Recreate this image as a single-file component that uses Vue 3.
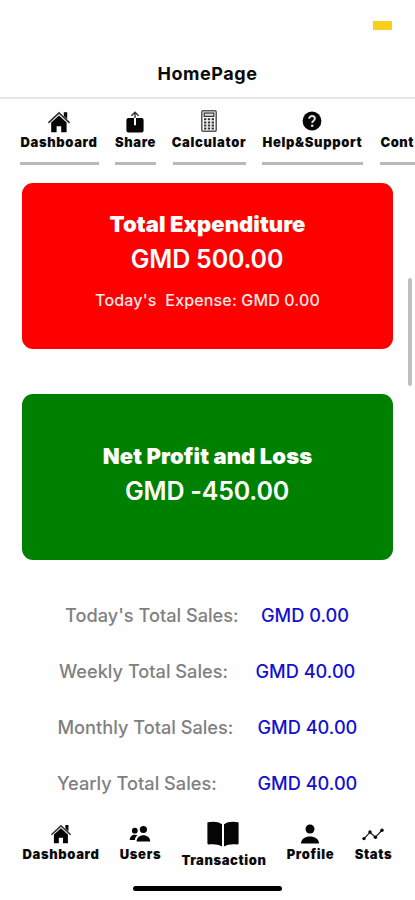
<script setup>
const tabs = [
  { label: 'Dashboard', icon: 'home', cls: 't-dashboard' },
  { label: 'Share', icon: 'share', cls: 't-share' },
  { label: 'Calculator', icon: 'calculator', cls: 't-calculator' },
  { label: 'Help&Support', icon: 'help', cls: 't-help' },
  { label: 'Cont', icon: '', cls: 't-contact' },
]
const sales = [
  { label: "Today's Total Sales:", value: 'GMD 0.00', cls: 's-today' },
  { label: 'Weekly Total Sales:', value: 'GMD 40.00', cls: 's-week' },
  { label: 'Monthly Total Sales:', value: 'GMD 40.00', cls: 's-month' },
  { label: 'Yearly Total Sales:', value: 'GMD 40.00', cls: 's-year' },
]
const nav = [
  { label: 'Dashboard', icon: 'home', cls: 'n-dashboard' },
  { label: 'Users', icon: 'users', cls: 'n-users' },
  { label: 'Transaction', icon: 'book', cls: 'n-transaction' },
  { label: 'Profile', icon: 'person', cls: 'n-profile' },
  { label: 'Stats', icon: 'stats', cls: 'n-stats' },
]
</script>

<template>
  <div class="screen">
    <svg class="defs" width="0" height="0" aria-hidden="true">
      <symbol id="home" viewBox="0 0 24 22">
        <path d="M16.8 1.200h3.400v7l-3.400-3.200z" />
        <path d="M12 4.600 4.200 11.600V21.200h5.400v-6h4.600v6h5.400v-9.600z" />
        <path d="M1.400 11.800 12 2l10.600 9.800" fill="none" stroke="#333" stroke-width="1.700" />
      </symbol>
      <symbol id="share" viewBox="0 0 18 22">
        <path d="M2.400 7h5.600v7.200h2V7h5.600a2 2 0 0 1 2 2v10.400a2 2 0 0 1-2 2H2.400a2 2 0 0 1-2-2V9a2 2 0 0 1 2-2z" />
        <path d="M9 7V1.500M5.400 4.800 9 1.200l3.600 3.600" fill="none" stroke="#333" stroke-width="1.400" />
      </symbol>
      <symbol id="calculator" viewBox="0 0 16 22">
        <rect x=".8" y=".8" width="14.400" height="20.400" rx="1.200" fill="#fff" stroke="#555" stroke-width="1.500" />
        <rect x="3.200" y="3" width="9.600" height="3.400" fill="#ddd" stroke="#333" stroke-width="1.200" />
        <path d="M3 9.200h2.400m1.400 0h2.400m1.400 0H13M3 12.400h2.400m1.400 0h2.400m1.400 0H13M3 15.600h2.400m1.400 0h2.400m1.400 0H13M3 18.600h2.400m1.400 0h2.400m1.400 0H13" stroke="#333" stroke-width="2" />
      </symbol>
      <symbol id="help" viewBox="0 0 20 20">
        <circle cx="10" cy="10" r="9.400" />
        <path d="M7.200 7.800c0-3.800 5.700-3.500 5.700-.2 0 2.200-2.700 2.100-2.700 4.300" fill="none" stroke="#ddd" stroke-width="2" />
        <circle cx="10.200" cy="14.700" r="1.300" fill="#ddd" />
      </symbol>
      <symbol id="users" viewBox="0 0 22 18">
        <circle cx="14.400" cy="4.500" r="3.600" />
        <circle cx="5.800" cy="5.700" r="2.900" />
        <path d="M7.600 16.600c0-8.400 13.600-8.400 13.600 0z" />
        <path d="M.8 15c0-5 4.400-6.200 7.600-4.800-1.400 1.200-2.200 2.500-2.500 4.800z" />
      </symbol>
      <symbol id="book" viewBox="0 0 32 26">
        <path d="M.8 1.200C5.600.2 11.600.4 15 3.200v22.200C11.600 23.200 6 22.800 2 23.400.9 23.500.4 23 .4 22V2c0-.5.100-.7.400-.8z" />
        <path d="M31.200 1.200C26.400.2 20.400.4 17 3.200v22.200c3.400-2.200 9-2.600 13-2 1.100.1 1.600-.4 1.600-1.400V2c0-.5-.1-.7-.4-.8z" />
      </symbol>
      <symbol id="person" viewBox="0 0 20 20">
        <circle cx="10" cy="5" r="4.500" />
        <path d="M1 19.600c0-9.400 18-9.400 18 0z" />
      </symbol>
      <symbol id="stats" viewBox="0 0 22 13">
        <path d="m2 10.600 6-6.200 5.400 4.800L20 2.200" fill="none" stroke="#222" stroke-width="1.300" />
        <circle cx="2" cy="10.600" r="1.700" /><circle cx="8" cy="4" r="1.700" />
        <circle cx="13.400" cy="9.200" r="1.700" /><circle cx="20" cy="2.200" r="1.700" />
      </symbol>
    </svg>

    <header class="header">
      <div class="status"><span class="battery"></span></div>
      <h1 class="title">HomePage</h1>
    </header>

    <nav class="tabs">
      <a v-for="t in tabs" :key="t.label" class="tab" :class="t.cls">
        <span class="tab-icon"><svg v-if="t.icon" :class="'i-' + t.icon"><use :href="'#' + t.icon" /></svg></span>
        <span class="tab-label">{{ t.label }}</span>
      </a>
    </nav>

    <main class="content">
      <section class="card expense">
        <h2 class="card-title">Total Expenditure</h2>
        <p class="amount">GMD 500.00</p>
        <p class="note">Today's&nbsp; Expense: GMD 0.00</p>
      </section>
      <section class="card profit">
        <h2 class="card-title">Net Profit and Loss</h2>
        <p class="amount">GMD -450.00</p>
      </section>
      <ul class="sales">
        <li v-for="s in sales" :key="s.label" :class="s.cls">
          <span class="sale-label">{{ s.label }}</span><span class="sale-value">{{ s.value }}</span>
        </li>
      </ul>
    </main>

    <footer class="bottom">
      <nav class="nav">
        <a v-for="n in nav" :key="n.label" class="nav-item" :class="n.cls">
          <span class="nav-icon"><svg :class="'i-' + n.icon"><use :href="'#' + n.icon" /></svg></span>
          <span class="nav-label">{{ n.label }}</span>
        </a>
      </nav>
      <div class="indicator"></div>
    </footer>
    <div class="scrollbar"></div>
  </div>
</template>

<style>
body { margin: 0; background: #fefefe; }
</style>

<style scoped>
.screen { position: relative; width: 415px; height: 900px; overflow: hidden; display: flex; flex-direction: column; background: #fefefe; font-family: Inter, "Liberation Sans", sans-serif; color: #0a0a0a; white-space: nowrap; }
.defs { position: absolute; }
h1, h2, p, ul { margin: 0; padding: 0; }
.header { box-sizing: border-box; height: 99px; border-bottom: 2px solid #e5e5e5; }
.status { height: 61px; box-sizing: border-box; padding: 21px 23px 0 0; display: flex; justify-content: flex-end; }
.battery { width: 19px; height: 9px; background: #f7cf1d; }
.title { font-size: 18px; line-height: 25px; font-weight: 700; text-align: center; letter-spacing: .55px; }
.tabs { display: flex; gap: 16.500px; height: 84px; box-sizing: border-box; padding: 10px 0 0 19.500px; }
.tab { flex: none; display: flex; flex-direction: column; align-items: center; height: 56px; box-sizing: border-box; border-bottom: 3px solid #b8b8b8; }
.tab-icon { height: 25px; display: flex; align-items: center; }
.tab-label, .nav-label { font-size: 13px; line-height: 16px; font-weight: 900; letter-spacing: .65px; }
.t-dashboard { width: 79px; }
.t-share { width: 41px; }
.t-calculator { width: 73px; }
.t-help { width: 101px; }
.t-contact { width: 35.500px; align-items: flex-start; }
.t-contact .tab-label { letter-spacing: .5px; padding-left: 1px; }
svg { fill: #050505; display: block; }
.i-home { width: 24px; height: 22px; }
.i-share { width: 18px; height: 22px; margin-right: 2px; }
.i-calculator { width: 16px; height: 22px; margin-bottom: 1px; }
.i-help { width: 20px; height: 20px; margin: 0 2px 1px 0; }
.i-users { width: 22px; height: 18px; }
.i-book { width: 32px; height: 26px; }
.i-person { width: 20px; height: 20px; }
.i-stats { width: 22px; height: 13px; }
.content { padding: 0 22px; }
.card { height: 166px; box-sizing: border-box; border-radius: 11px; color: #fff; text-align: center; }
.expense { background: #fe0000; padding-top: 26px; }
.profit { background: #008000; margin-top: 45px; padding-top: 47px; }
.card-title { font-size: 22px; line-height: 31px; font-weight: 900; letter-spacing: .08px; }
.amount { font-size: 25px; line-height: 38px; font-weight: 600; letter-spacing: -.2px; padding-right: 1px; }
.note { font-size: 16px; line-height: 24px; margin-top: 10px; font-weight: 500; letter-spacing: .15px; color: #ffe9e6; }
.sales { list-style: none; padding-top: 27px; }
.sales li { display: flex; height: 56px; line-height: 56px; font-size: 18.200px; font-weight: 500; }
.sale-label { color: #808080; }
.sale-value { color: #1210d0; }
.s-today { padding-left: 43px; } .s-today .sale-label { width: 196px; }
.s-week { padding-left: 37px; } .s-week .sale-label { width: 196.500px; }
.s-month { padding-left: 35.500px; } .s-month .sale-label { width: 200px; }
.s-year { padding-left: 35px; } .s-year .sale-label { width: 200.500px; }
.bottom { position: absolute; left: 0; right: 0; top: 816px; height: 84px; }
.nav { display: flex; padding-left: 22px; }
.nav-item { flex: none; display: flex; flex-direction: column; align-items: center; }
.nav-icon { height: 30px; display: flex; align-items: flex-end; }
.n-dashboard { width: 78px; margin-right: 20px; }
.n-dashboard svg { width: 22px; height: 20px; margin-bottom: 2px; }
.n-users { width: 41px; margin-right: 20px; }
.n-users svg { margin: 0 1px 3px 0; }
.n-transaction { width: 86px; margin-right: 19px; }
.n-transaction .nav-icon { height: 36px; align-items: flex-start; }
.n-transaction svg { margin: 5px 2px 0 0; }
.n-transaction .nav-label { letter-spacing: .6px; }
.n-profile { width: 49px; margin-right: 19px; }
.n-profile svg { margin: 0 2px 2px 0; }
.n-stats { width: 39px; }
.n-stats svg { margin: 0 1px 5px 0; }
.indicator { position: absolute; left: 133px; top: 70px; width: 149px; height: 5px; border-radius: 3px; background: #000; }
.scrollbar { position: absolute; left: 408px; top: 278px; width: 4px; height: 108px; border-radius: 2px; background: #bfbfbf; }
</style>
